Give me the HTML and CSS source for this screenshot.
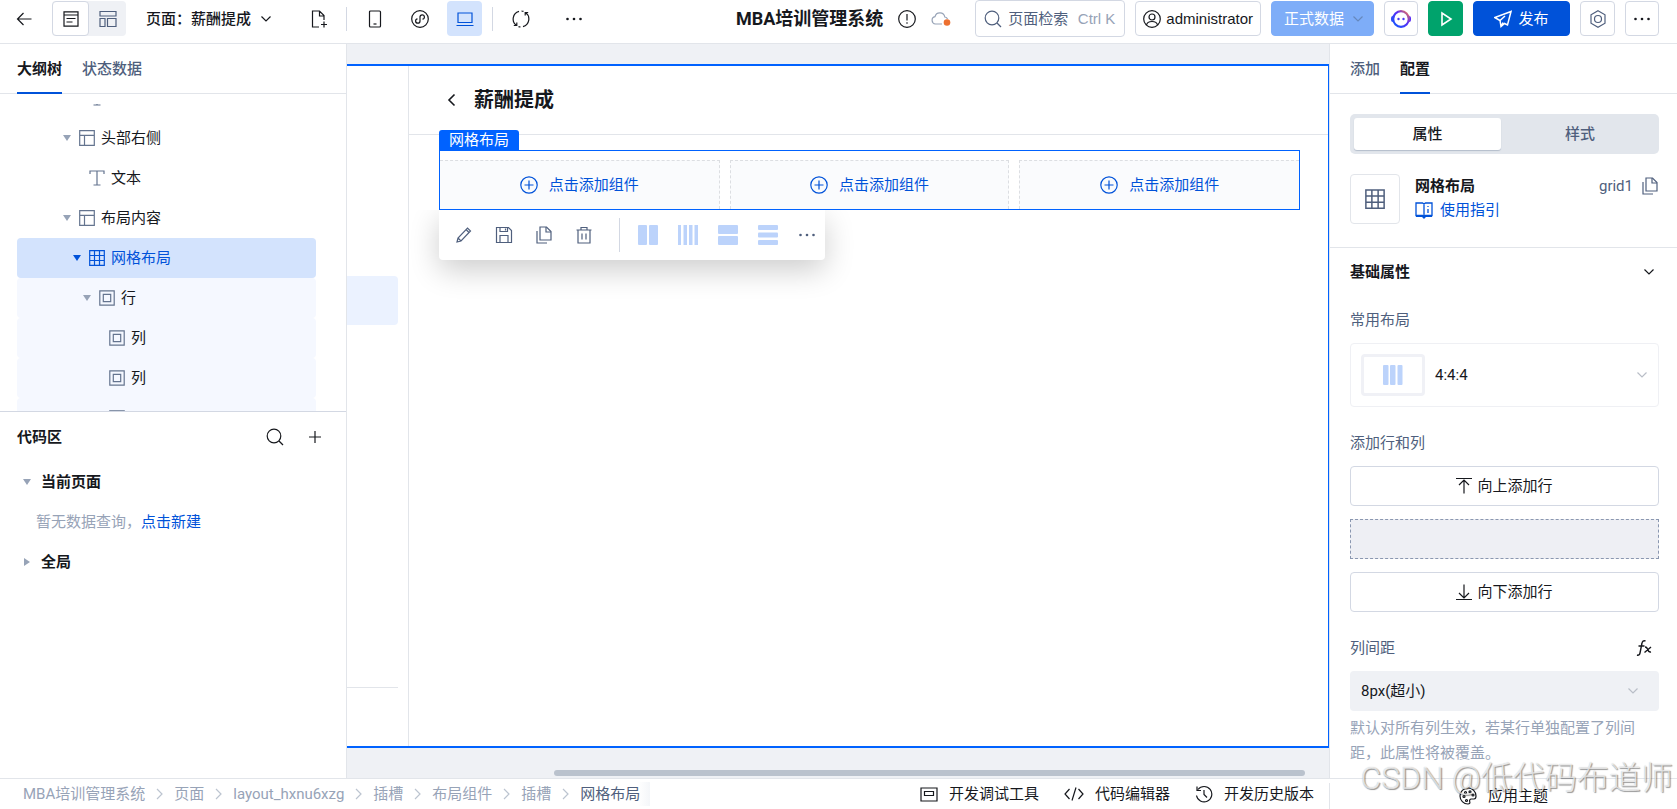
FILE: index.html
```html
<!DOCTYPE html>
<html lang="zh-CN">
<head>
<meta charset="utf-8">
<title>MBA培训管理系统</title>
<link rel="stylesheet" href="styles.css">
</head>
<body>
<svg class="sprite" aria-hidden="true">
  <symbol id="i-down" viewBox="0 0 12 12"><path d="M1.5 3.5 6 8l4.500-4.500"/></symbol>
  <symbol id="i-right" viewBox="0 0 7 12"><path d="M1 1l5 5-5 5"/></symbol>
  <symbol id="i-more" viewBox="0 0 18 18"><g fill="currentColor" stroke="none"><circle cx="2.500" cy="9" r="1.300"/><circle cx="9" cy="9" r="1.300"/><circle cx="15.500" cy="9" r="1.300"/></g></symbol>
  <symbol id="i-copy" viewBox="0 0 18 18"><path d="M5 1h6.500L16 5.500V14H5z"/><path d="M11 1v5h5M2 5v12h10"/></symbol>
  <symbol id="i-search" viewBox="0 0 18 18"><circle cx="8" cy="8" r="6.800"/><path d="m13 13 4 4"/></symbol>
  <symbol id="i-grid" viewBox="0 0 16 16"><path d="M.7.7h14.600v14.600H.7zM5.500.7v14.600M10.500.7v14.600M.7 5.500h14.600M.7 10.500h14.600"/></symbol>
  <symbol id="i-layout" viewBox="0 0 16 16"><path d="M.7.7h14.600v14.600H.7zM.7 5.300h14.600M5.500 5.300v10"/></symbol>
  <symbol id="i-text" viewBox="0 0 16 16"><path d="M1 4V1h14v3M8 1v14M4.500 15h7"/></symbol>
  <symbol id="i-box" viewBox="0 0 16 16"><path d="M.8.8h14.400v14.400H.8zM4.300 4.300h7.400v7.400H4.300z"/></symbol>
  <symbol id="i-plus-circle" viewBox="0 0 18 18"><circle cx="9" cy="9" r="8.200"/><path d="M9 4.500v9M4.500 9h9"/></symbol>
</svg>

<header class="topbar">
  <button class="icon-plain" aria-label="返回"><svg width="16" height="16" viewBox="0 0 16 16"><path d="M15.500 8H1.500M7.500 2l-6 6 6 6"/></svg></button>
  <div class="view-switch">
    <button class="on" aria-label="大纲视图"><svg width="18" height="18" viewBox="0 0 18 18"><path d="M2 1.800h14v14.400H2zM2 5h14M4.500 8.500h9M4.500 12h6"/></svg></button>
    <button aria-label="布局视图"><svg width="18" height="18" viewBox="0 0 18 18"><path d="M1 1.500h16v4.500H1zM1 8.500h5v8H1zM8.500 8.500H17v8H8.500z"/></svg></button>
  </div>
  <button class="page-select"><span>页面：薪酬提成</span><svg width="12" height="12"><use href="#i-down"/></svg></button>
  <div class="tools">
    <button class="tool" aria-label="新建页面"><svg width="18" height="18" viewBox="0 0 18 18"><path d="M9 17H2.500V1h7L14 5.500V10M9.500 1v5H14M14 11.500v6M11 14.500h6"/></svg></button>
    <i class="vline"></i>
    <button class="tool" aria-label="手机"><svg width="18" height="18" viewBox="0 0 18 18"><rect x="3.500" y="1" width="11" height="16" rx="1"/><path d="M7.500 14h3"/></svg></button>
    <button class="tool" aria-label="小程序"><svg width="18" height="18" viewBox="0 0 18 18"><circle cx="9" cy="9" r="8.300"/><path d="M6.500 8.800a2.200 2.200 0 1 0 2.500 2.300V6.900a2.200 2.200 0 1 1 2.500 2.300"/></svg></button>
    <button class="tool on" aria-label="电脑"><svg width="18" height="18" viewBox="0 0 18 18"><path d="M2 3h14v9.500H2zM.5 15.500h17"/></svg></button>
    <i class="vline"></i>
    <button class="tool" aria-label="刷新"><svg width="18" height="18" viewBox="0 0 18 18"><path d="M7 1.300A8 8 0 0 0 4.500 15.500M1.800 15.500h3v-3M11 16.700A8 8 0 0 0 13.500 2.500M16.200 2.500h-3v3M9.500 1a8 8 0 0 1 2 .4M8.500 17a8 8 0 0 1-2-.4"/></svg></button>
  </div>
  <button class="tool" aria-label="更多"><svg width="18" height="18"><use href="#i-more"/></svg></button>

  <div class="app-name">
    <h1>MBA培训管理系统</h1>
    <svg width="18" height="18" viewBox="0 0 18 18"><circle cx="9" cy="9" r="8.300"/><path d="M9 4v6.500M9 12.300v1.500"/></svg>
    <svg class="cloud" width="20" height="18" viewBox="0 0 20 18"><path d="M11 14H4.500A3.700 3.700 0 0 1 4 6.700 5 5 0 0 1 13.800 7a3 3 0 0 1 2.700 2"/><circle class="dot" cx="16" cy="12.500" r="3.300"/></svg>
  </div>

  <div class="actions">
    <label class="search"><svg width="18" height="18"><use href="#i-search"/></svg><input type="text" placeholder="页面检索" aria-label="页面检索"><kbd>Ctrl K</kbd></label>
    <button class="btn user"><svg width="18" height="18" viewBox="0 0 18 18"><circle cx="9" cy="9" r="8.300"/><circle cx="9" cy="7" r="3"/><path d="M3.500 15c.5-2.500 2.500-3.500 5.500-3.500s5 1 5.500 3.500"/></svg>administrator</button>
    <div class="btn env"><select aria-label="数据环境"><option>正式数据</option></select><svg width="12" height="12"><use href="#i-down"/></svg></div>
    <button class="btn narrow" aria-label="AI 助手"><svg width="22" height="20" viewBox="0 0 22 20"><defs><linearGradient id="ai" x1="0" y1="1" x2="1" y2="0"><stop offset="0" stop-color="#0d5bff"/><stop offset=".6" stop-color="#5b2df5"/><stop offset="1" stop-color="#ff7a45"/></linearGradient></defs><rect x="1" y="7" width="4" height="6" rx="2" fill="#3350f5" stroke="none"/><rect x="17" y="7" width="4" height="6" rx="2" fill="#5b2df5" stroke="none"/><circle cx="11" cy="10" r="7.800" fill="#fff" stroke="url(#ai)" stroke-width="2.200"/><g fill="#4b39f5" stroke="none"><circle cx="8.500" cy="10" r="1.200"/><circle cx="13.500" cy="10" r="1.200"/></g></svg></button>
    <button class="btn square run" aria-label="预览"><svg width="18" height="18" viewBox="0 0 18 18"><path stroke-width="1.600" d="M5 3v12l9-6z"/></svg></button>
    <button class="btn publish"><svg width="18" height="18" viewBox="0 0 18 18"><path stroke-width="1.500" d="M17 1.500.8 7.500l5.200 3 1 6 3.500-3 3 1.500zM6 10.500l5-4.500M7 16.500l2-4"/></svg>发布</button>
    <button class="btn square muted" aria-label="设置"><svg width="18" height="18" viewBox="0 0 18 18"><path d="m9 .8 7 4v8.400l-7 4-7-4V4.800z"/><circle cx="9" cy="9" r="3.500"/></svg></button>
    <button class="btn narrow" aria-label="更多操作"><svg width="18" height="18"><use href="#i-more"/></svg></button>
  </div>
</header>

<main class="workspace">
  <aside class="left">
    <nav class="tabs"><button class="on">大纲树</button><button>状态数据</button></nav>
    <div class="tree-view">
      <ul class="tree">
        <li class="row l2"><i class="tri none"></i><svg width="16" height="16"><use href="#i-text"/></svg></li>
        <li class="row l1"><i class="tri"></i><svg width="16" height="16"><use href="#i-layout"/></svg>头部右侧</li>
        <li class="row l2"><i class="tri none"></i><svg width="16" height="16"><use href="#i-text"/></svg>文本</li>
        <li class="row l1"><i class="tri"></i><svg width="16" height="16"><use href="#i-layout"/></svg>布局内容</li>
        <li class="row l2 selected"><i class="tri"></i><svg width="16" height="16"><use href="#i-grid"/></svg>网格布局</li>
        <li class="row l3 child"><i class="tri"></i><svg width="16" height="16"><use href="#i-box"/></svg>行</li>
        <li class="row l4 child"><i class="tri none"></i><svg width="16" height="16"><use href="#i-box"/></svg>列</li>
        <li class="row l4 child"><i class="tri none"></i><svg width="16" height="16"><use href="#i-box"/></svg>列</li>
        <li class="row l4 child"><i class="tri none"></i><svg width="16" height="16"><use href="#i-box"/></svg></li>
      </ul>
    </div>
    <section class="code">
      <header class="code-head">
        <h2>代码区</h2>
        <button class="icon-plain" aria-label="搜索"><svg width="18" height="18"><use href="#i-search"/></svg></button>
        <button class="icon-plain" aria-label="新建"><svg width="18" height="18" viewBox="0 0 18 18"><path d="M9 3v12M3 9h12"/></svg></button>
      </header>
      <h3 class="code-row"><i class="tri"></i>当前页面</h3>
      <p class="code-empty">暂无数据查询，<a href="#new">点击新建</a></p>
      <h3 class="code-row"><i class="tri closed"></i>全局</h3>
    </section>
  </aside>

  <section class="canvas">
    <div class="frame">
      <div class="frame-side"><div class="side-item"></div><div class="side-foot"></div></div>
      <div class="frame-main">
        <header class="page-head"><svg width="12" height="16" viewBox="0 0 12 16"><path stroke-width="1.600" d="M9.500 2.500 4 8l5.500 5.500"/></svg><h2>薪酬提成</h2></header>
        <div class="selection">
          <span class="sel-label">网格布局</span>
          <div class="cells">
            <button class="cell"><svg width="18" height="18"><use href="#i-plus-circle"/></svg>点击添加组件</button>
            <button class="cell"><svg width="18" height="18"><use href="#i-plus-circle"/></svg>点击添加组件</button>
            <button class="cell"><svg width="18" height="18"><use href="#i-plus-circle"/></svg>点击添加组件</button>
          </div>
          <div class="float-bar">
            <button aria-label="编辑"><svg width="18" height="18" viewBox="0 0 18 18"><path d="M2 16l1-4L12.500 2 15.500 5 6 15zM11 3.500l3 3M3 12l3 3"/></svg></button>
            <button aria-label="保存"><svg width="18" height="18" viewBox="0 0 18 18"><path d="M1.500 1.500h12l3 3v12h-15zM5 1.500v4h7.500v-4M5 16.500V9.500h8v7M10.500 2.500v2"/></svg></button>
            <button aria-label="复制"><svg width="18" height="18"><use href="#i-copy"/></svg></button>
            <button aria-label="删除"><svg width="18" height="18" viewBox="0 0 18 18"><path d="M1.500 4h15M6 4V1.500h6V4M3 4v13h12V4M7 7.500v6M11 7.500v6"/></svg></button>
            <i class="vline"></i>
            <button class="shape" aria-label="两列"><svg width="20" height="20" viewBox="0 0 20 20"><rect width="9" height="20" rx="1"/><rect x="11" width="9" height="20" rx="1"/></svg></button>
            <button class="shape" aria-label="四列"><svg width="20" height="20" viewBox="0 0 20 20"><rect width="3" height="20"/><rect x="5.500" width="3.500" height="20"/><rect x="11" width="3.500" height="20"/><rect x="16.500" width="3.500" height="20"/></svg></button>
            <button class="shape" aria-label="两行"><svg width="20" height="20" viewBox="0 0 20 20"><rect width="20" height="9" rx="1"/><rect y="11" width="20" height="9" rx="1"/></svg></button>
            <button class="shape" aria-label="三行"><svg width="20" height="20" viewBox="0 0 20 20"><rect width="20" height="5" rx="1"/><rect y="7.500" width="20" height="5" rx="1"/><rect y="15" width="20" height="5" rx="1"/></svg></button>
            <button aria-label="更多"><svg width="18" height="18"><use href="#i-more"/></svg></button>
          </div>
        </div>
      </div>
    </div>
    <div class="scroll-track"><div class="scroll-thumb"></div></div>
  </section>

  <aside class="right">
    <nav class="tabs"><button>添加</button><button class="on">配置</button></nav>
    <div class="intro">
      <div class="segment"><button class="on">属性</button><button>样式</button></div>
      <div class="component">
        <div class="comp-icon"><svg width="20" height="20"><use href="#i-grid"/></svg></div>
        <div class="comp-text">
          <h3>网格布局</h3>
          <a href="#guide"><svg width="18" height="18" viewBox="0 0 18 18"><path stroke-width="1.300" d="M9 3v12M1 2h6.500L9 3l1.500-1H17v12.500h-6.500L9 16l-1.500-1.500H1zM13 5v1M13 8v4"/><path stroke-width="2" d="M1 15h6.500L9 16.500l1.500-1.500H17"/></svg>使用指引</a>
        </div>
        <div class="comp-id">grid1<button class="icon-plain" aria-label="复制标识"><svg width="18" height="18"><use href="#i-copy"/></svg></button></div>
      </div>
    </div>
    <div class="props">
      <button class="group-title">基础属性<svg width="12" height="12"><use href="#i-down"/></svg></button>
      <div class="field">
        <label for="preset">常用布局</label>
        <div class="preset">
          <span class="thumb"><svg width="20" height="20" viewBox="0 0 20 20"><rect width="5.500" height="20" rx="1"/><rect x="7" width="5.500" height="20" rx="1"/><rect x="14.500" width="5" height="20" rx="1"/></svg></span>
          <select id="preset"><option>4:4:4</option></select>
          <svg class="pale" width="12" height="12"><use href="#i-down"/></svg>
        </div>
      </div>
      <div class="field">
        <span class="label">添加行和列</span>
        <div class="rows">
          <button class="add"><svg width="16" height="18" viewBox="0 0 16 18"><path d="M0 1.500h16M8 16.500V3.500M3 8l5-5 5 5"/></svg>向上添加行</button>
          <div class="row-preview"></div>
          <button class="add"><svg width="16" height="18" viewBox="0 0 16 18"><path d="M0 16.500h16M8 1.500v13M3 10l5 5 5-5"/></svg>向下添加行</button>
        </div>
      </div>
      <div class="field">
        <div class="label-line"><label for="gap">列间距</label><button class="icon-plain fx" aria-label="表达式"><svg width="18" height="18" viewBox="0 0 18 18"><path stroke-width="1.400" d="M10.500 2c-2-.8-3.200.2-3.600 2.500L5 14c-.4 2-1.500 2.500-3 2M3.500 7h6M10 8c1.500 0 2 .5 2.500 2s1.500 3.500 3.500 3M16 8l-6.500 5.500"/></svg></button></div>
        <div class="gap-select"><select id="gap"><option>8px(超小)</option></select><svg class="pale" width="12" height="12"><use href="#i-down"/></svg></div>
        <p class="hint">默认对所有列生效，若某行单独配置了列间距，此属性将被覆盖。</p>
      </div>
    </div>
  </aside>
</main>

<footer class="status">
  <nav class="crumbs">
    <a href="#c1">MBA培训管理系统</a><svg width="7" height="12"><use href="#i-right"/></svg>
    <a href="#c2">页面</a><svg width="7" height="12"><use href="#i-right"/></svg>
    <a href="#c3">layout_hxnu6xzg</a><svg width="7" height="12"><use href="#i-right"/></svg>
    <a href="#c4">插槽</a><svg width="7" height="12"><use href="#i-right"/></svg>
    <a href="#c5">布局组件</a><svg width="7" height="12"><use href="#i-right"/></svg>
    <a href="#c6">插槽</a><svg width="7" height="12"><use href="#i-right"/></svg>
    <a class="here" href="#c7">网格布局</a>
  </nav>
  <div class="dev">
    <button><svg width="18" height="18" viewBox="0 0 18 18"><path d="M1 3h16v13H1zM4.500 6.500h9v4h-9z"/></svg>开发调试工具</button>
    <button><svg width="20" height="18" viewBox="0 0 20 18"><path d="M5.500 4 1 9l4.500 5M14.500 4 19 9l-4.500 5M12 2.500l-4 13"/></svg>代码编辑器</button>
    <button><svg width="18" height="18" viewBox="0 0 18 18"><path d="M3 4.500a7.700 7.700 0 1 1-1.500 6M2 1.500V5.500h4M9 5v4.500l3 3"/></svg>开发历史版本</button>
  </div>
  <div class="theme"><button><svg width="18" height="18" viewBox="0 0 18 18"><path d="M9 1a8 8 0 1 0 0 16c1.500 0 2.200-.8 1.800-2-.5-1.500-.3-3 1.700-3H15c1.500 0 2-1.200 2-3 0-4.500-3.500-8-8-8z"/><circle cx="5" cy="9.500" r="1"/><circle cx="6.500" cy="5.500" r="1"/><circle cx="11" cy="4.800" r="1"/><circle cx="14" cy="8" r="1"/><circle cx="7.500" cy="13.500" r="1"/></svg>应用主题</button></div>
</footer>
<div class="watermark">CSDN @低代码布道师</div>
</body>
</html>
```
FILE: styles.css
```css
* { box-sizing: border-box; }
:root {
  --blue: #0052d9;
  --frame: #0062ff;
  --ink: #16181d;
  --slate: #4f5f7d;
  --pale: #97a3b7;
  --line: #e2e5ea;
  --border: #d3d8e3;
  --surface: #eff1f5;
}
body {
  margin: 0;
  height: 100vh;
  display: flex;
  flex-direction: column;
  overflow: hidden;
  background: #fff;
  color: var(--ink);
  font: 15px/24px Roboto, "Noto Sans CJK SC", sans-serif;
}
h1, h2, h3, p, ul { margin: 0; padding: 0; list-style: none; }
h2, h3 { font-size: 15px; font-weight: 700; }
a { color: var(--blue); text-decoration: none; }
button, input, select, kbd { font: inherit; color: inherit; }
button, select {
  margin: 0;
  padding: 0;
  border: 0;
  background: none;
  appearance: none;
}
svg { flex: none; display: block; fill: none; stroke: currentColor; stroke-width: 1.200; }
.sprite { position: absolute; width: 0; height: 0; }
.vline { flex: none; width: 1px; background: var(--border); }
.icon-plain { display: flex; }

/* Top bar */
.topbar {
  flex: none;
  height: 44px;
  padding: 0 18px 6px 16px;
  display: flex;
  align-items: center;
  border-bottom: 1px solid var(--line);
}
.view-switch {
  display: flex;
  margin: 0 20px;
  border-radius: 4px;
  background: var(--surface);
  color: var(--slate);
}
.view-switch button {
  width: 37px;
  height: 35px;
  display: grid;
  place-items: center;
  border: 1px solid transparent;
  border-radius: 4px;
}
.view-switch .on { background: #fff; border-color: var(--border); color: var(--ink); }
.page-select { display: flex; align-items: center; gap: 9px; margin-right: 29px; font-weight: 500; }
.tools { display: flex; gap: 10px; margin-right: 18px; }
.tools .vline { height: 24px; align-self: center; }
.tool {
  flex: none;
  width: 35px;
  height: 35px;
  display: grid;
  place-items: center;
  border-radius: 4px;
}
.tool.on { background: #d3e3fd; color: var(--blue); }
.app-name {
  flex: 1;
  display: flex;
  align-items: center;
  justify-content: flex-end;
  gap: 15px;
  margin-right: 24px;
}
.app-name h1 { font-size: 18px; font-weight: 700; white-space: nowrap; }
.cloud { color: var(--pale); }
.cloud .dot { fill: #ed7030; stroke: none; }
.actions { display: flex; align-items: center; gap: 10px; font-family: "Liberation Sans", "Noto Sans CJK SC", sans-serif; }
.search {
  width: 150px;
  height: 37px;
  padding: 0 9px 0 8px;
  display: flex;
  align-items: center;
  gap: 6px;
  border: 1px solid var(--border);
  border-radius: 4px;
  color: var(--slate);
}
.search input { flex: 1; min-width: 0; padding: 0; border: 0; outline: 0; background: none; }
.search input::placeholder { color: var(--slate); opacity: 1; }
.search kbd { color: var(--pale); white-space: nowrap; }
.btn {
  height: 35px;
  display: flex;
  align-items: center;
  justify-content: center;
  border: 1px solid var(--border);
  border-radius: 4px;
}
.btn.square { width: 35px; }
.btn.narrow { width: 34px; }
.user { gap: 5px; padding: 0 7px; }
.env { gap: 7px; padding: 0 9px 0 12px; border-color: #7eadf8; background: #7eadf8; color: #fff; }
.env svg { color: #6688bd; }
.run { border-color: #00a36c; background: #00a36c; color: #fff; }
.publish { width: 97px; gap: 6px; border-color: var(--blue); background: var(--blue); color: #fff; }
.muted { color: var(--slate); }

/* Panels */
.workspace { flex: 1; min-height: 0; display: flex; }
.left {
  flex: none;
  width: 347px;
  display: flex;
  flex-direction: column;
  border-right: 1px solid var(--line);
}
.tabs {
  flex: none;
  height: 50px;
  display: flex;
  gap: 20px;
  padding: 0 17px;
  border-bottom: 1px solid var(--line);
}
.tabs button { height: 50px; padding-top: 2px; border-bottom: 2px solid transparent; color: var(--slate); font-weight: 500; }
.tabs .on { border-color: var(--blue); color: var(--ink); font-weight: 700; }

/* Outline tree */
.tree-view { flex: none; height: 307px; margin-top: 10px; overflow: hidden; }
.tree { margin: -26px 30px 0 17px; }
.row { height: 40px; display: flex; align-items: center; border-radius: 4px; }
.row svg { margin-right: 6px; color: #64748f; }
.l1 { padding-left: 38px; }
.l2 { padding-left: 48px; }
.l3 { padding-left: 58px; }
.l4 { padding-left: 68px; }
.child { background: #f5f8ff; }
.selected, .selected svg { color: var(--blue); }
.selected { background: #d3e3fd; }
.tri { flex: none; width: 24px; display: grid; place-items: center; color: var(--pale); }
.tri::before {
  content: "";
  border: 4px solid transparent;
  border-top: 6px solid currentColor;
  border-bottom: 0;
}
.tri.none { visibility: hidden; }
.tri.closed::before { border: 4px solid transparent; border-left: 6px solid currentColor; border-right: 0; }
.selected .tri { color: var(--blue); }

/* Code section */
.code { flex: 1; border-top: 1px solid var(--border); }
.code-head { height: 50px; padding: 0 22px 0 17px; display: flex; align-items: center; gap: 22px; }
.code-head h2 { flex: 1; }
.code-row, .code-empty { height: 40px; display: flex; align-items: center; }
.code-row { padding-left: 15px; gap: 2px; }
.code-empty { padding-left: 36px; color: var(--pale); }

/* Canvas */
.canvas {
  flex: 1;
  min-width: 0;
  display: flex;
  flex-direction: column;
  padding-top: 20px;
  background: var(--surface);
}
.frame {
  flex: 1;
  display: flex;
  background: #fff;
  border: 2px solid var(--frame);
  border-left: 0;
  border-right-width: 1px;
}
.frame-side {
  flex: none;
  width: 62px;
  padding: 210px 10px 58px 0;
  display: flex;
  flex-direction: column;
  justify-content: space-between;
  border-right: 1px solid var(--line);
}
.side-item { height: 49px; border-radius: 0 4px 4px 0; background: #ebf2ff; }
.side-foot { height: 1px; background: var(--line); }
.frame-main { flex: 1; min-width: 0; }
.page-head {
  height: 69px;
  padding: 0 36px;
  display: flex;
  align-items: center;
  gap: 17px;
  border-bottom: 1px solid var(--line);
}
.page-head h2 { font-size: 20px; }
.selection {
  position: relative;
  height: 60px;
  margin: 15px 28px 0 30px;
  border: 1px solid var(--frame);
}
.sel-label {
  position: absolute;
  left: -1px;
  bottom: 100%;
  margin-bottom: 1px;
  padding: 0 10px;
  border-radius: 3px 3px 0 0;
  background: var(--frame);
  color: #fff;
  line-height: 20px;
}
.cells { display: grid; grid-template-columns: repeat(3, 1fr); gap: 10px; height: 100%; padding-top: 9px; }
.cell {
  display: flex;
  align-items: center;
  justify-content: center;
  gap: 11px;
  border: 1px dashed #dcdee2;
  border-bottom: 0;
  background: #fafbfd;
  color: var(--blue);
}
.cell:first-child { border-left: 0; }
.cell:last-child { border-right: 0; }
.float-bar {
  position: absolute;
  left: -1px;
  top: 59px;
  height: 50px;
  padding: 0 0 0 5px;
  display: flex;
  align-items: center;
  border-radius: 0 0 4px 4px;
  background: #fff;
  color: var(--slate);
  clip-path: inset(0 -60px -60px -60px);
  box-shadow: 0 10px 30px rgba(0, 0, 0, .2);
}
.float-bar button { width: 40px; height: 40px; display: grid; place-items: center; }
.float-bar button:last-child { width: 37px; }
.float-bar .vline { height: 34px; margin: 0 8px 0 15px; }
.shape svg, .thumb svg { fill: #bcd3fb; stroke: none; }
.scroll-track { flex: none; height: 30px; padding: 22px 24px 2px 207px; }
.scroll-thumb { height: 6px; border-radius: 3px; background: #bac2cd; }

/* Properties */
.right {
  flex: none;
  width: 348px;
  display: flex;
  flex-direction: column;
  overflow: hidden;
  border-left: 1px solid var(--line);
}
.right .tabs { padding: 0 20px; }
.intro { padding: 20px 18px 23px 20px; border-bottom: 1px solid var(--line); }
.segment {
  height: 40px;
  padding: 4px 0 4px 4px;
  display: grid;
  grid-template-columns: 147px 1fr;
  border-radius: 5px;
  background: #e2e6ec;
}
.segment button { color: var(--slate); font-weight: 500; }
.segment .on { border-radius: 3px; background: #fff; color: var(--ink); box-shadow: 0 1px 1px #b4bdcb; }
.component { display: flex; gap: 15px; margin-top: 20px; }
.comp-icon {
  width: 50px;
  height: 50px;
  display: grid;
  place-items: center;
  border: 1px solid var(--line);
  border-radius: 4px;
  color: var(--slate);
}
.comp-text { flex: 1; }
.comp-text a { display: flex; align-items: center; gap: 7px; }
.comp-id { display: flex; align-items: center; gap: 8px; height: 24px; color: var(--slate); }
.props { padding: 0 18px 0 20px; }
.group-title { width: 100%; height: 48px; padding-right: 4px; display: flex; align-items: center; justify-content: space-between; font-weight: 700; }
.field { padding-top: 12px; margin-bottom: 12px; color: var(--slate); }
.field label, .label { display: block; margin-bottom: 11px; }
.preset { height: 64px; padding: 0 10px; display: flex; align-items: center; gap: 10px; border: 1px solid #eff0f4; border-radius: 4px; color: var(--ink); }
.thumb { width: 64px; height: 42px; display: grid; place-items: center; border: 3px solid #f0f1f6; border-radius: 4px; }
.preset select, .gap-select select { flex: 1; text-align: left; }
.pale { color: #b9bec7; }
.rows { display: flex; flex-direction: column; gap: 13px; margin-bottom: 12px; }
.add {
  height: 40px;
  display: flex;
  align-items: center;
  justify-content: center;
  gap: 5px;
  border: 1px solid var(--border);
  border-radius: 4px;
  color: var(--ink);
}
.row-preview { height: 40px; border: 1px dashed #8a97b0; background: #eeeff4; }
.label-line { display: flex; justify-content: space-between; padding-right: 6px; }
.fx { height: 24px; align-items: center; color: var(--ink); }
.gap-select { height: 40px; padding: 0 20px 0 11px; display: flex; align-items: center; border-radius: 4px; background: var(--surface); color: var(--ink); }
.hint { margin-top: 5px; color: var(--pale); line-height: 25px; }

/* Status bar */
.status { flex: none; height: 31px; display: flex; align-items: center; border-top: 1px solid var(--line); background: #fff; white-space: nowrap; }
.crumbs { flex: 1; display: flex; align-items: center; gap: 11px; padding-left: 23px; color: #bcc4d0; }
.crumbs a { color: var(--pale); }
.crumbs .here { color: var(--slate); padding-right: 10px; background: linear-gradient(to left, #f4f6f9, #fff 12px); }
.dev { display: flex; gap: 25px; padding-right: 15px; }
.dev button, .theme button { display: flex; align-items: center; gap: 11px; }
.theme { width: 348px; height: 26px; align-self: flex-end; display: flex; justify-content: center; border-left: 1px solid var(--line); }
.watermark {
  position: absolute;
  right: 4px;
  bottom: 9px;
  color: rgba(255, 255, 255, .7);
  font-size: 32px;
  font-weight: 300;
  line-height: 44px;
  text-shadow: 1px 1px 1px rgba(0, 0, 0, .4), 0 0 1px rgba(0, 0, 0, .25);
  pointer-events: none;
}
```
